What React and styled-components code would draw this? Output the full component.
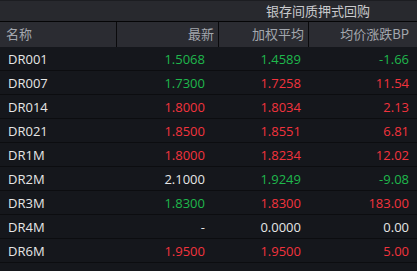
import React from "react"
import styled, { createGlobalStyle } from "styled-components"

const rows = [
  { name: "DR001", last: "1.5068", lastTone: "up", avg: "1.4589", avgTone: "up", bp: "-1.66", bpTone: "up" },
  { name: "DR007", last: "1.7300", lastTone: "up", avg: "1.7258", avgTone: "down", bp: "11.54", bpTone: "down" },
  { name: "DR014", last: "1.8000", lastTone: "down", avg: "1.8034", avgTone: "down", bp: "2.13", bpTone: "down" },
  { name: "DR021", last: "1.8500", lastTone: "down", avg: "1.8551", avgTone: "down", bp: "6.81", bpTone: "down" },
  { name: "DR1M", last: "1.8000", lastTone: "down", avg: "1.8234", avgTone: "down", bp: "12.02", bpTone: "down" },
  { name: "DR2M", last: "2.1000", lastTone: "flat", avg: "1.9249", avgTone: "up", bp: "-9.08", bpTone: "up" },
  { name: "DR3M", last: "1.8300", lastTone: "up", avg: "1.8300", avgTone: "down", bp: "183.00", bpTone: "down" },
  { name: "DR4M", last: "-", lastTone: "flat", avg: "0.0000", avgTone: "flat", bp: "0.00", bpTone: "flat" },
  { name: "DR6M", last: "1.9500", lastTone: "down", avg: "1.9500", avgTone: "down", bp: "5.00", bpTone: "down" },
]

const tones = {
  up: "#1fb84c",
  down: "#f2333d",
  flat: "#e6e6e6",
}

export default function App() {
  return (
    <>
      <GlobalStyle />
      <Panel>
        <TitleRow>
          <span />
          <Title>银存间质押式回购</Title>
        </TitleRow>
        <HeadRow>
          <HeadCell $align="left" $pad="6px">名称</HeadCell>
          <HeadCell $pad="4px">最新</HeadCell>
          <HeadCell $pad="4px">加权平均</HeadCell>
          <HeadCell $pad="8px" $last>均价涨跌BP</HeadCell>
        </HeadRow>
        {rows.map((r) => (
          <Row key={r.name}>
            <Cell $align="left" $pad="8px" $tone="flat">{r.name}</Cell>
            <Cell $pad="14px" $tone={r.lastTone}>{r.last}</Cell>
            <Cell $pad="8px" $tone={r.avgTone}>{r.avg}</Cell>
            <Cell $pad="8px" $tone={r.bpTone}>{r.bp}</Cell>
          </Row>
        ))}
      </Panel>
    </>
  )
}

const GlobalStyle = createGlobalStyle`
  html, body {
    margin: 0;
    background: #15171c;
  }
  body {
    font-family: "Open Sans", "Noto Sans CJK SC", sans-serif;
  }
`

const cols = "117px 102px 90px 1fr"

const Panel = styled.div`
  width: 417px;
  height: 271px;
  background: #15171c;
  overflow: hidden;
`

const TitleRow = styled.div`
  display: grid;
  grid-template-columns: 219px 1fr;
  box-sizing: border-box;
  height: 22px;
  border-top: 1px solid #1c1d21;
  border-bottom: 1px solid #050506;
  background: #28292e;
`

const Title = styled.div`
  text-align: center;
  font-family: "Noto Sans CJK SC", sans-serif;
  font-size: 13px;
  line-height: 20px;
  color: #c9cacd;
`

const HeadRow = styled.div`
  display: grid;
  grid-template-columns: ${cols};
  height: 25px;
  background: #2b2c32;
`

const HeadCell = styled.div`
  box-sizing: border-box;
  padding: 0 ${(p) => p.$pad} 0 ${(p) => (p.$align === "left" ? p.$pad : "0")};
  text-align: ${(p) => p.$align || "right"};
  border-right: ${(p) => (p.$last ? "none" : "1px solid #0a0a0c")};
  font-family: "Noto Sans CJK SC", sans-serif;
  font-size: 13px;
  line-height: 24px;
  color: #a3a7ae;
  white-space: nowrap;
`

const Row = styled.div`
  display: grid;
  grid-template-columns: ${cols};
  height: 24px;
  box-sizing: border-box;
  border-bottom: 1px solid #0c0d10;
`

const Cell = styled.div`
  box-sizing: border-box;
  padding: 0 ${(p) => p.$pad} 0 ${(p) => (p.$align === "left" ? p.$pad : "0")};
  text-align: ${(p) => p.$align || "right"};
  font-size: 13px;
  line-height: 25px;
  color: ${(p) => tones[p.$tone]};
  white-space: nowrap;
`
